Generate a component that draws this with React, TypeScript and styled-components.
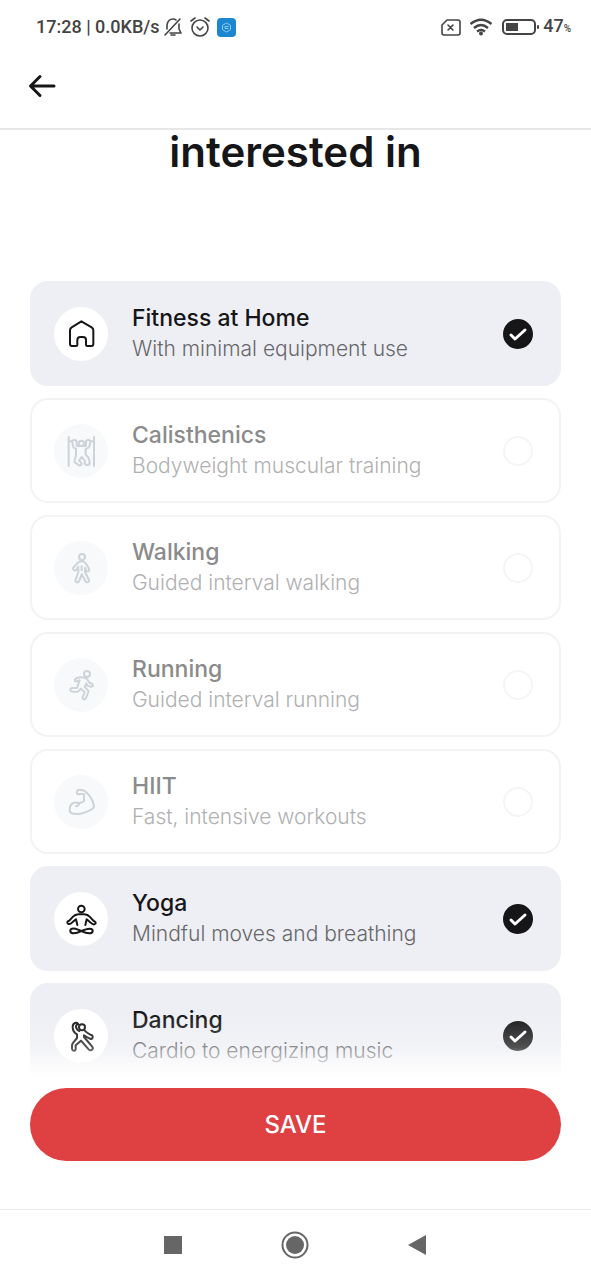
import React, { useState } from "react";
import styled, { createGlobalStyle } from "styled-components";

const GlobalStyle = createGlobalStyle`
  * { box-sizing: border-box; }
  body { margin: 0; background: #fff; }
  button, input { font: inherit; margin: 0; }
`;

const heading = `"Gilroy", "Inter", "Liberation Sans", sans-serif`;
const text = `"Inter", "Liberation Sans", sans-serif`;
const system = `"Roboto", "Liberation Sans", sans-serif`;

const Screen = styled.div`
  display: flex;
  flex-direction: column;
  min-height: 100vh;
  background: #fff;
  color: #161618;
  font-family: ${text};
`;

const StatusBar = styled.div`
  display: flex;
  align-items: center;
  justify-content: space-between;
  height: 56px;
  padding: 0 20px 2px 36px;
  color: #444;
  font: 500 18px/24px ${system};
`;

const StatusGroup = styled.div<{ $gap: number }>`
  display: flex;
  align-items: center;
  gap: ${(p) => p.$gap}px;
  white-space: nowrap;
`;

const Battery = styled.div`
  display: flex;
  align-items: center;
  gap: 4px;
`;

const Percent = styled.small`
  font-size: 10px;
`;

const StatusIcon = styled.svg`
  display: block;
  flex: none;
  fill: none;
  stroke: currentColor;
  stroke-width: 2;
  stroke-linecap: round;
  stroke-linejoin: round;
`;

const Header = styled.header`
  display: flex;
  align-items: center;
  flex: none;
  height: 74px;
  padding: 0 24px 12px;
  border-bottom: 2px solid #e7e7e7;
`;

const IconButton = styled.button`
  display: grid;
  place-items: center;
  width: 36px;
  height: 36px;
  padding: 0;
  border: 0;
  background: none;
  color: inherit;
`;

const Body = styled.div`
  position: relative;
  display: flex;
  flex: 1;
`;

const Content = styled.main`
  flex: 1;
  padding: 0 30px;
`;

const Title = styled.h1`
  margin: 0 0 107px;
  font: 600 42px/44px ${heading};
  text-align: center;
`;

const List = styled.div`
  display: grid;
  gap: 12px;
`;

const Card = styled.label<{ $on: boolean }>`
  display: flex;
  align-items: center;
  gap: 24px;
  height: 105px;
  padding: 0 26px 0 22px;
  border: 2px solid ${(p) => (p.$on ? "#eeeff4" : "#f3f3f5")};
  border-radius: 18px;
  background: ${(p) => (p.$on ? "#eeeff4" : "#fff")};
`;

const Badge = styled.span<{ $on: boolean }>`
  flex: none;
  width: 54px;
  height: 54px;
  border-radius: 50%;
  background: ${(p) => (p.$on ? "#fff" : "#f7f9fb")};
  color: ${(p) => (p.$on ? "#161618" : "#cdd3d8")};
`;

const Glyph = styled.svg`
  display: block;
  fill: none;
  stroke: currentColor;
  stroke-width: 6;
  stroke-linecap: round;
  stroke-linejoin: round;
`;

const Labels = styled.span`
  display: flex;
  flex-direction: column;
  flex: 1;
  min-width: 0;
`;

const Name = styled.span<{ $on: boolean }>`
  font: 500 23px/30px ${heading};
  color: ${(p) => (p.$on ? "#161618" : "#8b8b8c")};
`;

const Detail = styled.span<{ $on: boolean }>`
  font: 300 21px/32px ${text};
  color: ${(p) => (p.$on ? "#66676b" : "#b0b0b2")};
`;

const Tick = styled.span`
  display: grid;
  flex: none;
  place-items: center;

  > * { grid-area: 1 / 1; }
`;

const TickBox = styled.input`
  appearance: none;
  width: 30px;
  height: 30px;
  border: 2px solid #f5f5f6;
  border-radius: 50%;
  background: #fff;

  &:checked {
    border-color: #161618;
    background: #161618;
  }
`;

const TickMark = styled.svg`
  pointer-events: none;
  fill: none;
  stroke: #fff;
  stroke-width: 3;
  stroke-linecap: round;
  stroke-linejoin: round;
`;

const Fade = styled.div`
  position: absolute;
  inset: auto 0 0;
  height: 76px;
  pointer-events: none;
  background: linear-gradient(
    rgba(255, 255, 255, 0),
    rgba(255, 255, 255, 0.25) 46%,
    rgba(255, 255, 255, 0.75) 70%,
    #fff 88%
  );
`;

const Footer = styled.footer`
  flex: none;
  padding: 0 30px 48px;
`;

const SaveButton = styled.button`
  display: block;
  width: 100%;
  height: 73px;
  border: 0;
  border-radius: 37px;
  background: #df4143;
  color: #fff;
  font: 500 24px/30px ${heading};
`;

const NavBar = styled.nav`
  display: flex;
  align-items: center;
  justify-content: center;
  gap: 86px;
  flex: none;
  height: 71px;
  padding-right: 2px;
  border-top: 1px solid #ececec;
  color: #666;
`;

const glyphs = {
  home: (
    <path d="M124 83 L155 101 Q160 104 160 110 V151 Q160 157 154 157 H142 Q138 157 138 153 V139 Q138 130 129 130 H121 Q112 130 112 139 V153 Q112 157 108 157 H96 Q90 157 90 151 V110 Q90 104 95 101 Z" />
  ),
  calisthenics: (
    <>
      <path d="M86 79 V166 M162 79 V166 M86 92 H96 M152 92 H162" />
      <circle cx="124" cy="98" r="8" />
      <path d="M110 105 V93 Q109 88 103 88 Q96 88 97 94 L99 107 Q100 112 108 114 V133 L104 149 Q102 156 109 158 L117 164 Q124 166 125 159 Q125 155 117 150 L125 139 L134 149 V158 Q136 164 143 163 Q150 162 149 155 L146 142 L137 132 V115 Q146 112 148 108 L151 94 Q151 88 145 88 Q138 88 138 93 V105 M110 106 H138" />
    </>
  ),
  walking: (
    <>
      <circle cx="126" cy="88" r="9" />
      <path d="M117 103 Q125 98 133 103 Q137 106 141 113 L147 124 Q149 130 144 131 Q140 132 137 126 L135 120 V133 L147 157 Q148 164 142 164 Q138 164 136 160 L125 140 L118 159 Q116 165 110 164 Q105 162 107 156 L115 133 V117 L110 125 Q106 130 101 127 Q97 124 101 119 L111 108 Q114 104 117 103 Z" />
      <path d="M125 116 V128" />
    </>
  ),
  running: (
    <>
      <circle cx="141" cy="88" r="9" />
      <path d="M127 98 Q116 96 107 102 Q103 105 105 109 Q108 112 112 109 L119 107 L111 130 H96 Q90 131 91 137 Q92 141 97 141 H111 Q116 141 119 136 L122 132 L134 142 L128 157 Q127 162 131 164 Q136 165 138 160 L145 142 Q146 138 142 135 L134 127 L139 116 L142 122 Q144 125 148 125 L155 126 Q160 124 158 119 Q157 116 152 116 L149 115 L141 103 Q136 99 127 98 Z" />
    </>
  ),
  arm: (
    <path d="M113 98 Q109 94 111 89 Q112 84 118 84 L128 86 Q133 86 138 91 Q157 109 161 129 Q164 137 157 142 Q140 153 121 156 Q108 158 95 155 Q88 152 89 141 Q90 130 98 125 Q107 121 114 124 H119 Q129 122 132 118 V98 Q124 96 113 98 M108 134 Q115 134 119 124" />
  ),
  yoga: (
    <>
      <circle cx="124" cy="91" r="10" />
      <path d="M112 139 L108 122 L97 131 Q91 137 86 136 Q80 134 83 128 L88 126 L99 114 Q105 108 115 107 H133 Q143 108 149 114 L160 126 L166 130 Q169 135 163 137 Q158 138 152 132 L140 122 L136 139" />
      <path d="M124 157 L112 152 Q103 148 96 150 Q90 152 91 158 Q93 164 101 164 Q110 164 124 157 L138 152 Q147 149 154 151 Q159 153 158 158 Q156 164 148 164 Q138 164 124 157 Z" />
    </>
  ),
  dancing: (
    <>
      <circle cx="126" cy="95" r="9" />
      <path d="M115 86 Q112 79 105 82 Q98 84 98 94 Q98 109 111 116 V127 L98 143 Q96 146 96 151 V159 Q97 166 103 165 Q108 164 107 158 V149 L123 135 L146 161 Q151 166 156 162 Q161 158 156 152 L132 124 V119 Q141 126 152 130 Q158 130 158 123 Q158 118 151 117 Q140 111 134 105 M115 86 Q107 87 108 93 Q109 102 118 106" />
    </>
  ),
};

type Activity = { name: string; detail: string; glyph: keyof typeof glyphs };

const activities: Activity[] = [
  { name: "Fitness at Home", detail: "With minimal equipment use", glyph: "home" },
  { name: "Calisthenics", detail: "Bodyweight muscular training", glyph: "calisthenics" },
  { name: "Walking", detail: "Guided interval walking", glyph: "walking" },
  { name: "Running", detail: "Guided interval running", glyph: "running" },
  { name: "HIIT", detail: "Fast, intensive workouts", glyph: "arm" },
  { name: "Yoga", detail: "Mindful moves and breathing", glyph: "yoga" },
  { name: "Dancing", detail: "Cardio to energizing music", glyph: "dancing" },
];

function ActivityCard({ item, on, onToggle }: { item: Activity; on: boolean; onToggle: () => void }) {
  return (
    <Card $on={on}>
      <Badge $on={on}>
        <Glyph viewBox="42 40 162 162" width="54" height="54" aria-hidden="true">
          {glyphs[item.glyph]}
        </Glyph>
      </Badge>
      <Labels>
        <Name $on={on}>{item.name}</Name>
        <Detail $on={on}>{item.detail}</Detail>
      </Labels>
      <Tick>
        <TickBox type="checkbox" checked={on} onChange={onToggle} />
        {on && (
          <TickMark width="30" height="30" viewBox="0 0 30 30" aria-hidden="true">
            <path d="M8 16 L12 20 L22 11" />
          </TickMark>
        )}
      </Tick>
    </Card>
  );
}

export default function App() {
  const [chosen, setChosen] = useState<string[]>(["Fitness at Home", "Yoga", "Dancing"]);
  const toggle = (name: string) =>
    setChosen((c) => (c.includes(name) ? c.filter((n) => n !== name) : [...c, name]));

  return (
    <Screen>
      <GlobalStyle />
      <StatusBar>
        <StatusGroup $gap={3}>
          <span>17:28 | 0.0KB/s</span>
          <StatusGroup $gap={7}>
            <StatusIcon width="20" height="20" viewBox="0 0 20 20" aria-hidden="true">
              <path strokeWidth="1.6" d="M2 18 L17 2 M4 12 V8 Q5 2 10 2 Q12 2 13 3 M16 7 V12 L18 16 H7 M8 18 H12" />
            </StatusIcon>
            <StatusIcon width="20" height="20" viewBox="0 0 20 20" aria-hidden="true">
              <circle cx="10" cy="11" r="8" strokeWidth="1.6" />
              <path strokeWidth="1.6" d="M7 10 L10 13 L13 10 M1 4 L5 1 M19 4 L15 1" />
            </StatusIcon>
            <svg width="19" height="19" viewBox="0 0 19 19" aria-hidden="true">
              <rect width="19" height="19" rx="4" fill="#1c86d1" />
              <path d="M9.5 5 L13.5 7.3 V11.700 L9.5 14 L5.5 11.700 V7.3 Z" fill="none" stroke="#8accf3" />
              <path d="M11.5 8.5 H8 V10.5 H11.5" fill="none" stroke="#8accf3" />
            </svg>
          </StatusGroup>
        </StatusGroup>
        <StatusGroup $gap={8}>
          <StatusIcon width="20" height="17" viewBox="0 0 20 17" aria-hidden="true">
            <path strokeWidth="1.6" d="M6 1 H17 Q19 1 19 3 V14 Q19 16 17 16 H3 Q1 16 1 14 V6 Z M7 6 L12 11 M12 6 L7 11" />
          </StatusIcon>
          <StatusIcon width="24" height="18" viewBox="0 0 24 18" aria-hidden="true">
            <path strokeLinecap="butt" strokeWidth="2.4" d="M1.5 6 Q12 -2.5 22.5 6 M5 10 Q12 4 19 10 M8 13.5 Q12 10.5 16 13.5" />
            <circle cx="12" cy="15.5" r="1" />
          </StatusIcon>
          <Battery>
            <StatusIcon width="38" height="18" viewBox="0 0 38 18" aria-hidden="true">
              <rect x="2" y="2" width="32" height="14" rx="4" />
              <rect x="5" y="5" width="12" height="8" fill="currentColor" stroke="none" />
              <path d="M37 8 V10" />
            </StatusIcon>
            <span>47<Percent>%</Percent></span>
          </Battery>
        </StatusGroup>
      </StatusBar>
      <Header>
        <IconButton type="button" aria-label="Back">
          <svg width="28" height="24" viewBox="0 0 28 24" fill="none" stroke="currentColor" strokeWidth="3" strokeLinecap="round" strokeLinejoin="round">
            <path d="M12 2.5 L2.5 12 L12 21.5 M3 12 H26" />
          </svg>
        </IconButton>
      </Header>
      <Body>
        <Content>
          <Title>interested in</Title>
          <List>
            {activities.map((item) => (
              <ActivityCard key={item.name} item={item} on={chosen.includes(item.name)} onToggle={() => toggle(item.name)} />
            ))}
          </List>
        </Content>
        <Fade />
      </Body>
      <Footer>
        <SaveButton type="button">SAVE</SaveButton>
      </Footer>
      <NavBar aria-label="System">
        <IconButton type="button" aria-label="Recent apps">
          <svg width="18" height="18"><rect width="18" height="18" fill="currentColor" /></svg>
        </IconButton>
        <IconButton type="button" aria-label="Home">
          <svg width="28" height="28" viewBox="0 0 28 28">
            <circle cx="14" cy="14" r="12.5" fill="none" stroke="currentColor" strokeWidth="2" />
            <circle cx="14" cy="14" r="9" fill="currentColor" />
          </svg>
        </IconButton>
        <IconButton type="button" aria-label="Back">
          <svg width="18" height="20" viewBox="0 0 18 20"><path d="M18 0 V20 L0 10 Z" fill="currentColor" /></svg>
        </IconButton>
      </NavBar>
    </Screen>
  );
}
